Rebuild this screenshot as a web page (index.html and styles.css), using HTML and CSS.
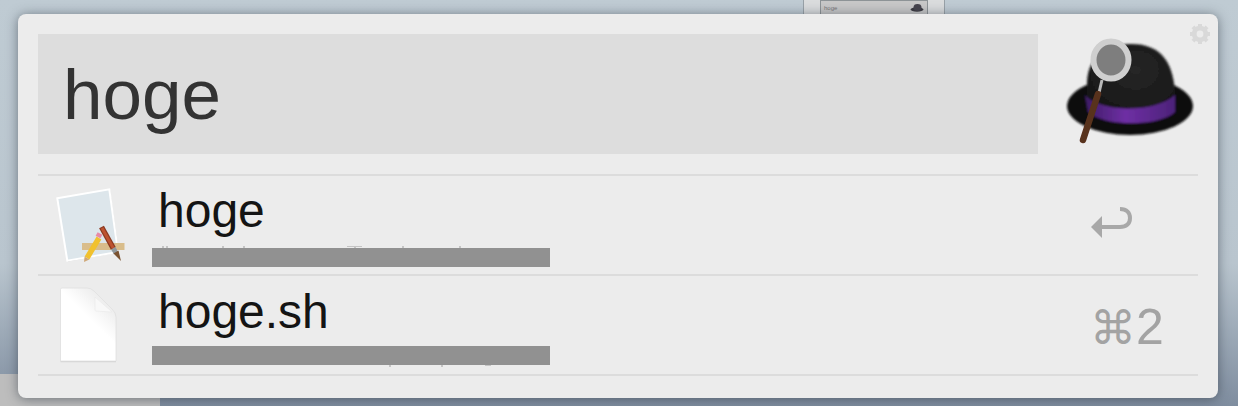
FILE: index.html
```html
<!DOCTYPE html>
<html lang="en">

<head>
  <meta charset="UTF-8" />
  <title>Alfred</title>
  <link rel="stylesheet" href="styles.css">
</head>

<body>

  <!-- desktop behind the window -->
  <div class="desk-corner"></div>
  <div class="desk-thumb">
    <div class="thumb-inner">
      <span class="thumb-text">hoge</span>
      <svg class="thumb-hat" viewBox="0 0 14 8">
        <ellipse cx="7" cy="5.5" rx="6.5" ry="2.2" fill="#3b3a40" />
        <ellipse cx="7.5" cy="3.5" rx="4" ry="3.4" fill="#45434c" />
      </svg>
    </div>
  </div>

  <div class="panel">
    <svg class="gear" viewBox="0 0 20 20">
      <g fill="#d9d9d9">
        <rect x="8" y="0" width="4" height="20" />
        <rect x="8" y="0" width="4" height="20" transform="rotate(45 10 10)" />
        <rect x="8" y="0" width="4" height="20" transform="rotate(90 10 10)" />
        <rect x="8" y="0" width="4" height="20" transform="rotate(135 10 10)" />
      </g>
      <circle cx="10" cy="10" r="6.5" fill="none" stroke="#d9d9d9" stroke-width="3.4" />
      <circle cx="10" cy="10" r="3.4" fill="#ececec" />
    </svg>

    <div class="search-row">
      <div class="search-box">hoge</div>
      <svg class="hat" viewBox="0 0 140 120">
        <defs>
          <radialGradient id="crownFill" cx="0.55" cy="0.35" r="0.7">
            <stop offset="0" stop-color="#262626" />
            <stop offset="1" stop-color="#151515" />
          </radialGradient>
          <linearGradient id="bandFill" x1="0" y1="0" x2="1" y2="0">
            <stop offset="0" stop-color="#3e1c66" />
            <stop offset="0.45" stop-color="#6e2fa4" />
            <stop offset="1" stop-color="#4c2279" />
          </linearGradient>
          <filter id="soft" x="-10%" y="-10%" width="120%" height="120%">
            <feGaussianBlur stdDeviation="1" />
          </filter>
          <filter id="softer" x="-10%" y="-10%" width="120%" height="120%">
            <feGaussianBlur stdDeviation="0.5" />
          </filter>
        </defs>
        <g filter="url(#soft)">
          <ellipse cx="66" cy="74" rx="63" ry="29" fill="#111111" />
          <path d="M23 50 C24 22 46 12 68 12 C96 12 111 30 111 66 C100 92 36 94 23 66 Z" fill="url(#crownFill)" />
          <path d="M21 63 C35 80 90 82 111 63 L111 80 C95 95 40 95 24 80 Z" fill="url(#bandFill)" />
        </g>
        <g filter="url(#softer)">
          <path d="M38 48 L34 65" stroke="#b9b9b9" stroke-width="3" />
          <path d="M34 62 L19 108" stroke="#59311d" stroke-width="6.5" stroke-linecap="round" />
          <ellipse cx="47" cy="28" rx="17.5" ry="18.5" fill="#7e7e7e" stroke="#cfcfcf" stroke-width="6" />
        </g>
      </svg>
    </div>

    <div class="result-row">
      <svg class="row-icon" viewBox="0 0 80 80">
        <path d="M8 14 L60 5 L69 67.5 L18 76.5 Z" fill="#c9c9c9" />
        <path d="M7.3 13.3 L59.3 4.3 L68 67 L17.3 75.7 Z" fill="#dde6eb" stroke="#ffffff" stroke-width="2" />
        <rect x="32" y="58" width="42.5" height="7" fill="#d9bd8b" />
        <path d="M51.5 42 L63.3 63.3" stroke="#8c3a22" stroke-width="5.5" />
        <path d="M52 43 L63.3 63.3" stroke="#bd5330" stroke-width="3" />
        <path d="M63.3 63.3 L66 68" stroke="#8f989d" stroke-width="5" />
        <path d="M63.5 68.5 L68.5 65.5 L71 76 Z" fill="#7a5230" />
        <path d="M49 53 L37 73" stroke="#f1c12e" stroke-width="5.5" />
        <path d="M48 52 L50 48.5" stroke="#e88aa6" stroke-width="5.5" />
        <path d="M34.6 71.5 L39.4 74.4 L34 77 Z" fill="#cfa878" />
      </svg>
      <div class="result-text">
        <div class="result-title">hoge</div>
        <div class="redacted">
          <svg class="peek" viewBox="0 0 398 2">
            <path d="M11 0v2M15 0v2M71 0v2M92 0v2M195 0h15M203 0v2M251 0v2M308 0v2" stroke="#c4c4c4" stroke-width="2" />
          </svg>
        </div>
      </div>
      <div class="shortcut">
        <svg class="return-key" viewBox="0 0 42 32">
          <path d="M29 2 C36 2 39 6 39 11 C39 17 35 20 29 20 L10 20" fill="none" stroke="#a8a8a8" stroke-width="4" />
          <path d="M0 20 L11 9 L11 31 Z" fill="#a8a8a8" />
        </svg>
      </div>
    </div>

    <div class="result-row result-row-file">
      <svg class="row-icon" viewBox="0 0 80 80">
        <defs>
          <linearGradient id="pageFill" x1="0.8" y1="0" x2="0.5" y2="0.4">
            <stop offset="0" stop-color="#e6e6e6" />
            <stop offset="1" stop-color="#ffffff" />
          </linearGradient>
        </defs>
        <path d="M10.5 3.5 L38 3.5 L66 30 L66 76.5 L10.5 76.5 Z" fill="#d4d4d4" transform="translate(0 0.8)" />
        <path d="M12 3 L37 3 Q41 3 44 6 L62 24 Q66 28 66 32 L66 76 L10.5 76 L10.5 4.5 Q10.5 3 12 3 Z" fill="url(#pageFill)" stroke="#e0e0e0" stroke-width="0.8" />
        <path d="M45 12 L45 25 Q45 26 46 26 L62 27 Z" fill="#f8f8f8" stroke="#e6e6e6" stroke-width="0.5" />
      </svg>
      <div class="result-text">
        <div class="result-title">hoge.sh</div>
        <div class="redacted">
          <svg class="peek peek-low" viewBox="0 0 398 2">
            <path d="M238 0v2M290 0v2M333 0h6" stroke="#c4c4c4" stroke-width="2" />
          </svg>
        </div>
      </div>
      <div class="shortcut shortcut-text"><span class="cmd">⌘</span>2</div>
    </div>
  </div>

</body>

</html>
```

FILE: styles.css
```css
html,
body {
  margin: 0;
  height: 100%;
}

body {
  font-family: "Liberation Sans", Arial, sans-serif;
  padding: 14px 20px 8px 18px;
  box-sizing: border-box;
  overflow: hidden;
  position: relative;
  background: linear-gradient(180deg, #bfcbd3 0%, #b9c5ce 65%, #7f8d9f 100%);
}

.desk-corner {
  position: absolute;
  left: 0;
  bottom: 0;
  width: 160px;
  height: 32px;
  background: #bdbdbd;
}

.desk-thumb {
  position: absolute;
  left: 803px;
  top: 0;
  width: 142px;
  height: 14px;
  padding: 0 12px;
  box-sizing: border-box;
  background: #dadcdd;
  border-left: 1px solid #98a1a7;
  border-right: 1px solid #98a1a7;
}

.thumb-inner {
  display: flex;
  justify-content: space-between;
  align-items: center;
  height: 14px;
  margin: 0 4px;
  padding: 0 3px;
  box-sizing: border-box;
  background: #c8c8c8;
  border: 1px solid #8d9396;
  border-bottom: none;
}

.thumb-text {
  font-size: 6px;
  color: #777;
}

.thumb-hat {
  width: 14px;
  height: 8px;
}

.panel {
  position: relative;
  width: 1200px;
  height: 384px;
  padding: 20px;
  box-sizing: border-box;
  background: #ececec;
  border-radius: 8px;
  box-shadow: 0 1px 12px rgba(40, 50, 60, 0.55);
}

.gear {
  position: absolute;
  left: 1172px;
  top: 10px;
  width: 20px;
  height: 20px;
}

.search-row {
  display: flex;
  height: 120px;
  margin-bottom: 20px;
}

.search-box {
  flex: 0 0 1000px;
  height: 120px;
  padding-left: 25px;
  box-sizing: border-box;
  background: #dddddd;
  color: #333333;
  font-size: 71px;
  line-height: 122px;
}

.hat {
  flex: 0 0 140px;
  height: 120px;
  margin-left: 26px;
  margin-top: -2px;
}

.result-row {
  display: flex;
  align-items: flex-start;
  height: 100px;
  box-sizing: border-box;
  border-top: 2px solid #dcdcdc;
}

.result-row:last-child {
  border-bottom: 2px solid #dcdcdc;
  height: 102px;
}

.row-icon {
  flex: 0 0 80px;
  height: 80px;
  margin: 9px 0 0 12px;
}

.result-text {
  flex: 0 0 398px;
  margin-left: 22px;
}

.result-title {
  font-size: 48px;
  line-height: 54px;
  height: 72px;
  padding: 8px 0 0 6px;
  box-sizing: border-box;
  color: #141414;
}

.result-row-file .result-title {
  height: 70px;
  padding-top: 9px;
}

.redacted {
  position: relative;
  height: 19px;
  background: #919191;
}

.peek {
  position: absolute;
  left: 0;
  top: -2px;
  width: 398px;
  height: 2px;
}

.peek-low {
  top: 19px;
}

.shortcut {
  margin-left: 542px;
  width: 80px;
}

.return-key {
  width: 42px;
  height: 32px;
  margin-top: 31px;
  margin-left: -1px;
  display: block;
}

.shortcut-text {
  font-size: 50px;
  line-height: 54px;
  margin-top: 24px;
  margin-left: 540px;
  color: #a3a3a3;
  white-space: nowrap;
}

.cmd {
  font-size: 46px;
}
```
